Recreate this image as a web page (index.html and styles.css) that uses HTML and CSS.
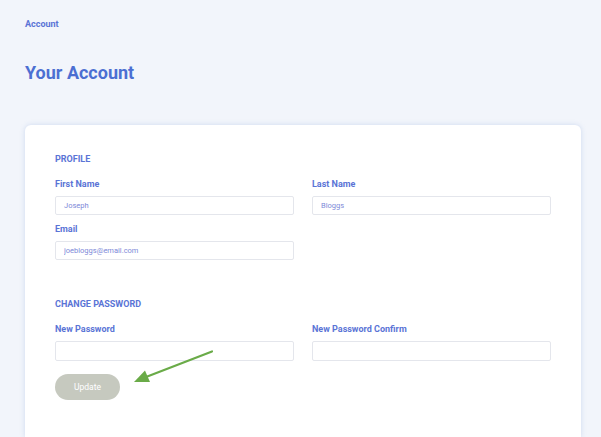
FILE: index.html
```html
<!DOCTYPE html>
<html lang="en">
<head>
    <meta charset="UTF-8">
    <meta name="viewport" content="width=device-width, initial-scale=1.0">
    <title>Your Account</title>
    <link rel="stylesheet" href="styles.css">
</head>
<body>
    <div class="page">
        <div class="breadcrumb">Account</div>
        <h1>Your Account</h1>
        <div class="card">
            <h3>PROFILE</h3>
            <div class="row">
                <div class="field">
                    <label>First Name</label>
                    <input type="text" value="Joseph">
                </div>
                <div class="field">
                    <label>Last Name</label>
                    <input type="text" value="Bloggs">
                </div>
            </div>
            <div class="row">
                <div class="field">
                    <label>Email</label>
                    <input type="text" value="joebloggs@email.com">
                </div>
            </div>
            <h3 class="password-title">CHANGE PASSWORD</h3>
            <div class="row">
                <div class="field">
                    <label>New Password</label>
                    <input type="password" class="tall">
                </div>
                <div class="field">
                    <label>New Password Confirm</label>
                    <input type="password" class="tall">
                </div>
            </div>
            <button class="update-button">Update</button>
        </div>
        <svg class="arrow" width="601" height="437" viewBox="0 0 601 437">
            <line x1="212" y1="351.5" x2="146" y2="377" stroke="#6aab48" stroke-width="2.2" stroke-linecap="round"/>
            <polygon points="134,382 145,370.5 150,382" fill="#6aab48"/>
        </svg>
    </div>
</body>
</html>
```
FILE: styles.css
```css
body {
    font-family: Roboto, "Liberation Sans", Arial, sans-serif;
    margin: 0;
    padding: 0;
    background-color: #f2f5fb;
    color: #5470d3;
    overflow: hidden;
}
.page {
    padding: 19px 20px 0 25px;
    position: relative;
    height: 437px;
    box-sizing: border-box;
}
.breadcrumb {
    font-size: 9px;
    font-weight: bold;
    line-height: 10px;
    color: #5a74d6;
}
h1 {
    font-size: 18px;
    font-weight: bold;
    line-height: 22px;
    margin: 33px 0 0 0;
    color: #4c6fd2;
}
.card {
    background-color: white;
    margin-top: 41px;
    width: 556px;
    box-sizing: border-box;
    padding: 29px 30px 37px 30px;
    border-radius: 6px 6px 0 0;
    box-shadow: 0 0 5px rgba(190, 205, 235, 0.7);
}
.card h3 {
    font-size: 9px;
    font-weight: bold;
    line-height: 10px;
    margin: 0 0 15px 0;
    color: #5a74d6;
}
.card h3.password-title {
    margin-top: 39px;
}
.row {
    display: grid;
    grid-template-columns: 239px 239px;
    gap: 18px;
    margin-bottom: 9px;
}
.field label {
    display: block;
    font-size: 9px;
    font-weight: bold;
    line-height: 10px;
    margin-bottom: 7px;
    color: #5a74d6;
}
.field input {
    display: block;
    width: 100%;
    box-sizing: border-box;
    height: 19px;
    padding: 0 8px;
    border: 1px solid #e4e6ec;
    border-radius: 2px;
    font-family: Roboto, "Liberation Sans", Arial, sans-serif;
    font-size: 7.5px;
    color: #7d89d8;
    outline: none;
}
.field input.tall {
    height: 20px;
}
.row:last-of-type {
    margin-bottom: 0;
}
.update-button {
    margin-top: 13px;
    width: 65px;
    height: 26px;
    border: none;
    border-radius: 13px;
    background-color: #c6c9bf;
    color: white;
    font-family: Roboto, "Liberation Sans", Arial, sans-serif;
    font-size: 8.5px;
    cursor: pointer;
}
.arrow {
    position: absolute;
    top: 0;
    left: 0;
    pointer-events: none;
}
```
